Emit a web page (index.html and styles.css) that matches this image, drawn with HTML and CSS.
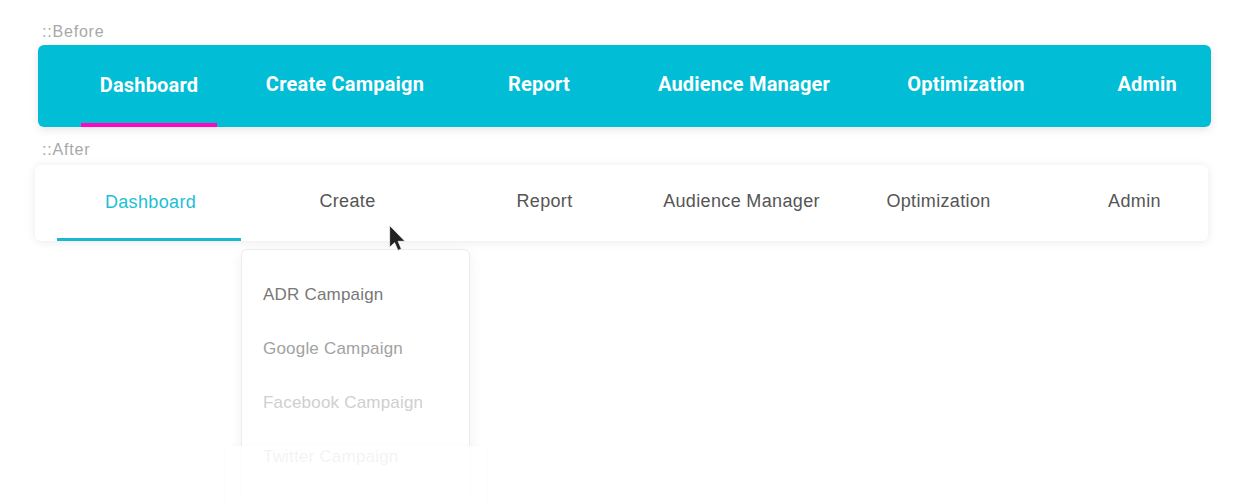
FILE: index.html
```html
<!DOCTYPE html>
<html>
<head>
<meta charset="utf-8">
<link rel="stylesheet" href="styles.css">
</head>
<body>
<div class="page">
  <div class="label label-before">::Before</div>
  <nav class="bar-old">
    <div class="old-item active">Dashboard</div>
    <div class="old-item">Create Campaign</div>
    <div class="old-item">Report</div>
    <div class="old-item">Audience Manager</div>
    <div class="old-item">Optimization</div>
    <div class="old-item last">Admin</div>
  </nav>
  <div class="label label-after">::After</div>
  <nav class="bar-new">
    <div class="new-item active">Dashboard</div>
    <div class="new-item">Create
      <div class="dropdown">
        <div class="dd-item dd-1">ADR Campaign</div>
        <div class="dd-item dd-2">Google Campaign</div>
        <div class="dd-item dd-3">Facebook Campaign</div>
        <div class="dd-item dd-4">Twitter Campaign</div>
      </div>
    </div>
    <div class="new-item">Report</div>
    <div class="new-item">Audience Manager</div>
    <div class="new-item">Optimization</div>
    <div class="new-item last">Admin</div>
  </nav>
  <div class="fade"></div>
  <svg class="cursor" width="17" height="26" viewBox="0 0 14 21.5">
    <path d="M0.5 0.5 L0.5 18.5 L4.6 14.6 L7.4 21 L10.2 19.8 L7.5 13.5 L13.2 13.5 Z" fill="#222" stroke="#fff" stroke-width="0.6"/>
  </svg>
</div>
</body>
</html>
```
FILE: styles.css
```css
html, body {
  margin: 0;
  padding: 0;
  background: #fff;
  height: 503px;
  overflow: hidden;
}
.page {
  position: relative;
  padding-top: 22px;
  height: 481px;
  font-family: Roboto, "Liberation Sans", sans-serif;
}
.label {
  font-family: "Liberation Sans", Arial, sans-serif;
  font-weight: 400;
  font-size: 16px;
  letter-spacing: 0.8px;
  line-height: 20px;
  height: 20px;
  color: #a8a8a8;
  margin-left: 42px;
}
.label-after {
  margin-top: 13px;
}
.bar-old {
  margin: 3px 0 0 38px;
  width: 1130px;
  height: 82px;
  padding-left: 43px;
  background: #01bdd6;
  border-radius: 6px;
  box-shadow: 0 3px 8px rgba(0, 0, 0, 0.10);
  display: grid;
  grid-template-columns: 136px 256px 132px 278px 166px 162px;
}
.old-item {
  position: relative;
  display: flex;
  align-items: center;
  justify-content: center;
  padding-bottom: 4px;
  color: #fff;
  font-family: Roboto, "Liberation Sans", sans-serif;
  font-weight: 700;
  font-size: 20px;
  letter-spacing: 0.2px;
  white-space: nowrap;
}
.old-item.active {
  padding-bottom: 2px;
}
.old-item.active::after {
  content: "";
  position: absolute;
  left: 0;
  right: 0;
  bottom: 0;
  height: 4px;
  background: #ff06bf;
}
.old-item.last {
  justify-content: flex-end;
  padding-right: 34px;
}
.bar-new {
  position: relative;
  margin: 5px 0 0 35px;
  width: 1156px;
  height: 76px;
  padding-left: 17px;
  background: #fff;
  border-radius: 6px;
  box-shadow: 0 1px 10px rgba(0, 0, 0, 0.09);
  display: grid;
  grid-template-columns: repeat(5, 197px) 1fr;
}
.new-item {
  position: relative;
  display: flex;
  align-items: center;
  justify-content: center;
  padding-bottom: 4px;
  color: #555;
  font-family: "Liberation Sans", Arial, sans-serif;
  font-size: 18px;
  letter-spacing: 0.35px;
  white-space: nowrap;
}
.new-item.active {
  color: #1cbfd5;
  padding-bottom: 2px;
}
.new-item.active::after {
  content: "";
  position: absolute;
  left: 5px;
  right: 8px;
  bottom: 0;
  height: 3px;
  background: #17b8d0;
}
.new-item.last {
  padding-left: 24px;
}
.dropdown {
  position: absolute;
  top: calc(100% + 8px);
  left: -8px;
  width: 227px;
  padding: 18px 0;
  background: #fff;
  border: 1px solid #ececec;
  border-radius: 6px;
  box-shadow: 0 4px 14px rgba(0, 0, 0, 0.06);
  z-index: 2;
}
.dd-item {
  height: 54px;
  display: flex;
  align-items: center;
  padding-left: 21px;
  font-family: "Liberation Sans", Arial, sans-serif;
  font-size: 17px;
  letter-spacing: 0.2px;
}
.dd-1 { color: #787878; }
.dd-2 { color: #a2a2a2; }
.dd-3 { color: #cfcfcf; }
.dd-4 { color: #a8a8a8; }
.fade {
  position: absolute;
  left: 226px;
  top: 446px;
  width: 260px;
  height: 60px;
  background: rgba(255, 255, 255, 0.86);
  box-shadow: 0 0 6px rgba(0, 0, 0, 0.025);
  z-index: 3;
}
.cursor {
  position: absolute;
  left: 389px;
  top: 225px;
  z-index: 4;
}
```
